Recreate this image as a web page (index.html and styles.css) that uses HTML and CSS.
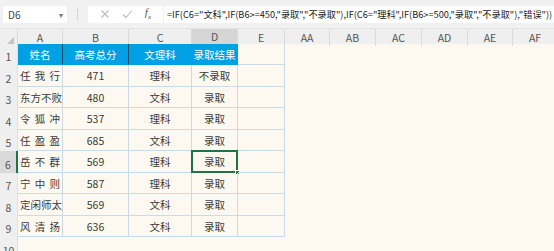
FILE: index.html
```html
<!DOCTYPE html>
<html>
<head>
    <meta charset="utf-8">
    <title>录取结果</title>
    <link rel="stylesheet" href="styles.css">
</head>
<body>

<div class="toolbar">
    <div class="name_box">
        <span>D6</span>
        <span class="drop">&#9662;</span>
    </div>
    <div class="tb_sep"></div>
    <div class="fx_box">
        <svg width="10" height="10" viewBox="0 0 10 10"><path d="M1.5 1.5 L8.5 8.5 M8.5 1.5 L1.5 8.5" stroke="#b9b9b9" stroke-width="1.1"/></svg>
        <svg width="11" height="10" viewBox="0 0 11 10"><path d="M1 5.5 L4 8.5 L10 1.5" stroke="#b9b9b9" stroke-width="1.1" fill="none"/></svg>
        <span class="fx">f<sub>x</sub></span>
    </div>
    <div class="formula">=IF(C6="文科",IF(B6&gt;=450,"录取","不录取"),IF(C6="理科",IF(B6&gt;=500,"录取","不录取"),"错误"))</div>
</div>

<div class="col_head">
    <div class="corner"></div>
    <div>A</div>
    <div>B</div>
    <div>C</div>
    <div class="cur">D</div>
    <div>E</div>
    <div>AA</div>
    <div>AB</div>
    <div>AC</div>
    <div>AD</div>
    <div>AE</div>
    <div>AF</div>
</div>

<div class="sheet">
    <div class="row r_odd">
        <div class="rh">1</div>
        <div class="c th sep_dark">姓名</div>
        <div class="c th sep_dark">高考总分</div>
        <div class="c th">文理科</div>
        <div class="c th">录取结果</div>
        <div class="c"></div>
    </div>
    <div class="row r_even">
        <div class="rh">2</div>
        <div class="c name"><span>任</span><span>我</span><span>行</span></div>
        <div class="c">471</div>
        <div class="c">理科</div>
        <div class="c">不录取</div>
        <div class="c"></div>
    </div>
    <div class="row r_odd">
        <div class="rh">3</div>
        <div class="c name"><span>东</span><span>方</span><span>不</span><span>败</span></div>
        <div class="c">480</div>
        <div class="c">文科</div>
        <div class="c">录取</div>
        <div class="c"></div>
    </div>
    <div class="row r_even">
        <div class="rh">4</div>
        <div class="c name"><span>令</span><span>狐</span><span>冲</span></div>
        <div class="c">537</div>
        <div class="c">理科</div>
        <div class="c">录取</div>
        <div class="c"></div>
    </div>
    <div class="row r_odd">
        <div class="rh">5</div>
        <div class="c name"><span>任</span><span>盈</span><span>盈</span></div>
        <div class="c">685</div>
        <div class="c">文科</div>
        <div class="c">录取</div>
        <div class="c"></div>
    </div>
    <div class="row r_even">
        <div class="rh cur">6</div>
        <div class="c name"><span>岳</span><span>不</span><span>群</span></div>
        <div class="c">569</div>
        <div class="c">理科</div>
        <div class="c active">录取<span class="handle"></span></div>
        <div class="c"></div>
    </div>
    <div class="row r_odd">
        <div class="rh">7</div>
        <div class="c name"><span>宁</span><span>中</span><span>则</span></div>
        <div class="c">587</div>
        <div class="c">理科</div>
        <div class="c">录取</div>
        <div class="c"></div>
    </div>
    <div class="row r_even">
        <div class="rh">8</div>
        <div class="c name"><span>定</span><span>闲</span><span>师</span><span>太</span></div>
        <div class="c">569</div>
        <div class="c">文科</div>
        <div class="c">录取</div>
        <div class="c"></div>
    </div>
    <div class="row r_odd">
        <div class="rh">9</div>
        <div class="c name"><span>风</span><span>清</span><span>扬</span></div>
        <div class="c">636</div>
        <div class="c">文科</div>
        <div class="c">录取</div>
        <div class="c"></div>
    </div>
    <div class="row r_even blank">
        <div class="rh">10</div>
    </div>
</div>

</body>
</html>
```

FILE: styles.css
```css
*{
    box-sizing:border-box;
}
body{
    margin:0;
    background:#fdf9f0;
    font-family:"Noto Sans CJK SC","Noto Sans",sans-serif;
    color:#333;
    overflow:hidden;
}
.toolbar{
    height:29px;
    background:#f1f1f1;
    display:flex;
    align-items:center;
    padding-left:3px;
    border-bottom:1px solid #e2e2e2;
}
.name_box{
    flex-shrink:0;
    width:64px;
    height:17px;
    background:#fff;
    border-radius:2px;
    display:flex;
    align-items:center;
    justify-content:space-between;
    padding:0 4px 0 5px;
    font-size:10px;
    color:#444;
}
.name_box .drop{
    font-size:8px;
    color:#777;
}
.tb_sep{
    flex-shrink:0;
    width:1px;
    height:11px;
    margin:0 10px;
    border-left:1px dotted #b8b8b8;
}
.fx_box{
    flex-shrink:0;
    width:75px;
    height:17px;
    background:#fff;
    border-radius:2px;
    display:flex;
    align-items:center;
    justify-content:space-around;
    padding:0 6px;
}
.fx{
    font-family:"Liberation Serif",serif;
    font-style:italic;
    font-size:11px;
    color:#555;
}
.fx sub{
    font-size:7px;
}
.formula{
    flex:1;
    min-width:0;
    overflow:hidden;
    height:17px;
    margin-left:1px;
    background:#fff;
    font-size:9.2px;
    line-height:17px;
    padding-left:3px;
    white-space:nowrap;
    color:#222;
}
.col_head{
    display:grid;
    grid-template-columns:18px 45px 66px 63px 46px 47px 45px 46px 46px 46px 45px 45px;
    height:15px;
    background:#efefef;
    font-size:10.5px;
    color:#555;
}
.col_head div{
    display:flex;
    align-items:center;
    justify-content:center;
    border-right:1px solid #dadada;
}
.col_head .cur{
    background:#d6d6d6;
    border-bottom:2px solid #217346;
}
.corner{
    position:relative;
}
.corner:after{
    content:"";
    position:absolute;
    right:3px;
    bottom:2px;
    border-left:7px solid transparent;
    border-bottom:7px solid #c4c4c4;
}
.row{
    display:grid;
    grid-template-columns:18px 45px 66px 63px 46px 47px;
}
.r_odd{
    height:21px;
}
.r_even{
    height:22px;
}
.rh{
    background:#efefef;
    font-size:10.5px;
    color:#555;
    display:flex;
    align-items:flex-end;
    justify-content:center;
    padding-bottom:1px;
    border-right:1px solid #e0e0e0;
}
.rh.cur{
    background:#dadada;
    border-right:2px solid #217346;
}
.c{
    border-right:1px solid #c9dbe7;
    border-bottom:1px solid #c9dbe7;
    display:flex;
    align-items:center;
    justify-content:center;
    font-size:10.5px;
    color:#3a3a3a;
    position:relative;
    white-space:nowrap;
}
.th{
    background:#00a1e4;
    color:#fff;
    border-bottom-color:#00a1e4;
    border-right-color:#00a1e4;
}
.th.sep_dark{
    border-right-color:#1b4d6b;
}
.name{
    justify-content:space-between;
    padding:0 2px;
}
.active{
    border:2px solid #217346;
    margin:-1px 0 0 -1px;
}
.handle{
    position:absolute;
    right:-4px;
    bottom:-4px;
    width:5px;
    height:5px;
    background:#217346;
    border:1px solid #fff;
}
```
